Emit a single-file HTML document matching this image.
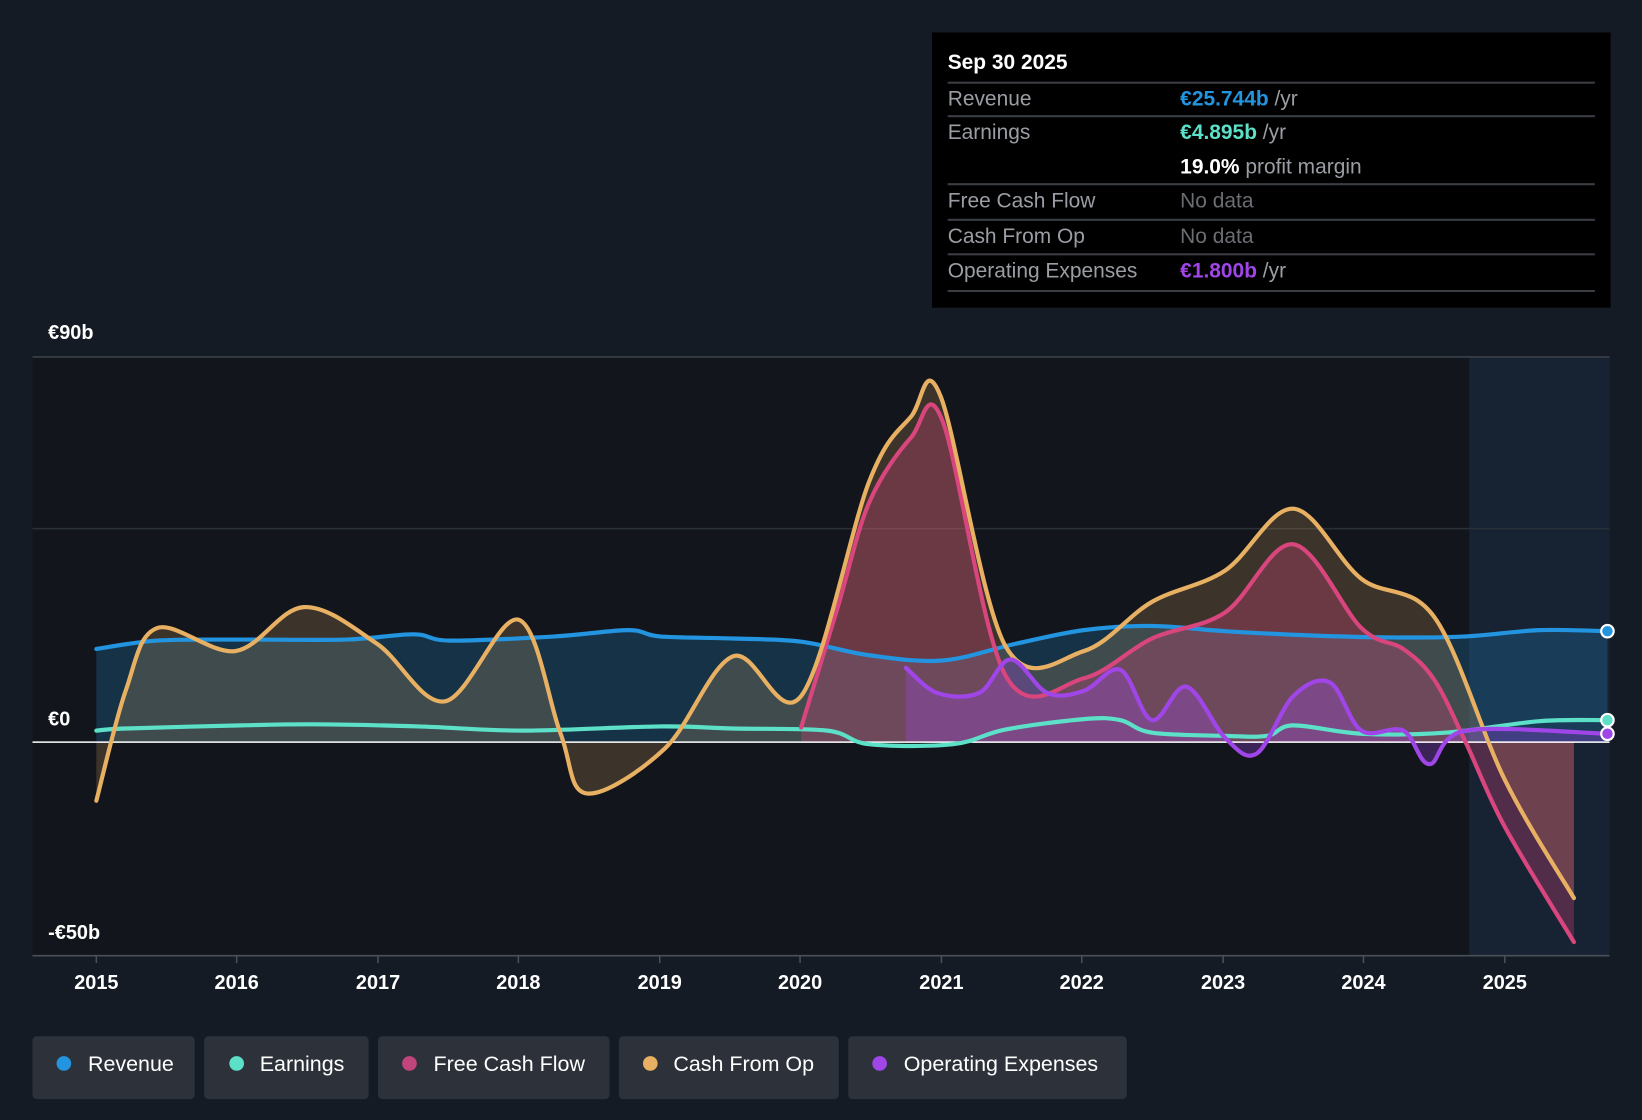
<!DOCTYPE html>
<html><head><meta charset="utf-8"><style>
html,body{margin:0;padding:0;background:#151b24;width:1642px;height:1120px;overflow:hidden}
svg{display:block}
text{font-family:"Liberation Sans",sans-serif}
</style></head><body>
<svg id="c" width="1642" height="1120" viewBox="0 0 1568 1070" preserveAspectRatio="none" xmlns="http://www.w3.org/2000/svg">
<rect width="1568" height="1070" fill="#151b24"/>
<rect x="31" y="341" width="1506" height="572" fill="#12161c"/>
<rect x="1403" y="341" width="134" height="572" fill="#172333"/>
<line x1="31" y1="341" x2="1537" y2="341" stroke="#3a4049" stroke-width="1.5"/>
<line x1="31" y1="505" x2="1537" y2="505" stroke="#2a3038" stroke-width="1.5"/>
<line x1="31" y1="913" x2="1537" y2="913" stroke="#4a5058" stroke-width="1.5"/>
<text x="46" y="324" fill="#fff" font-size="19" font-weight="bold">€90b</text>
<text x="46" y="693" fill="#fff" font-size="19" font-weight="bold">€0</text>
<text x="46" y="897" fill="#fff" font-size="19" font-weight="bold">-€50b</text>

<!-- fills -->
<polygon class="s" fill="#2394df" fill-opacity="0.22" points="92,709 92,620 150,612 230,611 330,611 395,606 430,612 530,608 600,602 630,608 700,610 765,613 830,626 900,631 970,615 1035,602 1100,598 1170,603 1250,607 1330,609 1400,608 1470,602 1535,603 1535,709"/>
<polygon class="s" fill="#e8b062" fill-opacity="0.2" points="92,709 92,765 120,660 150,600 225,622 290,580 360,615 425,670 495,592 535,700 560,758 635,715 700,627 765,665 830,460 870,398 898,378 960,617 1035,622 1100,575 1170,545 1235,486 1300,553 1370,590 1437,745 1503,858 1503,709"/>
<polygon class="s" fill="#d9457d" fill-opacity="0.3" points="765,709 765,695 800,580 830,480 870,418 900,402 960,645 1035,648 1100,610 1170,585 1235,520 1300,600 1340,620 1370,650 1400,710 1437,790 1503,900 1503,709"/>
<polygon class="s" fill="#a046e8" fill-opacity="0.3" points="865,709 865,638 895,662 935,662 965,630 1000,662 1035,660 1070,640 1100,688 1133,656 1170,705 1200,720 1235,665 1270,652 1300,698 1340,698 1365,730 1400,698 1535,701 1535,709"/>

<line x1="31" y1="709" x2="1537" y2="709" stroke="#fff" stroke-width="1.5"/>

<g fill="none" stroke-width="4" stroke-linejoin="round" stroke-linecap="round">
<polyline class="s" stroke="#2394df" points="92,620 150,612 230,611 330,611 395,606 430,612 530,608 600,602 630,608 700,610 765,613 830,626 900,631 970,615 1035,602 1100,598 1170,603 1250,607 1330,609 1400,608 1470,602 1535,603"/>
<polyline class="s" stroke="#5de0c8" points="92,698 120,696 230,693 300,692 400,694 500,698 630,694 700,696 790,698 830,711 910,711 960,697 1035,687 1070,688 1100,700 1170,703 1210,703 1235,693 1300,701 1380,700 1470,689 1535,688"/>
<polyline class="s" stroke="#d9457d" points="765,695 800,580 830,480 870,418 900,402 960,645 1035,648 1100,610 1170,585 1235,520 1300,600 1340,620 1370,650 1400,710 1437,790 1503,900"/>
<polyline class="s" stroke="#e8b062" points="92,765 120,660 150,600 225,622 290,580 360,615 425,670 495,592 535,700 560,758 635,715 700,627 765,665 830,460 870,398 898,378 960,617 1035,622 1100,575 1170,545 1235,486 1300,553 1370,590 1437,745 1503,858"/>
<polyline class="s" stroke="#a046e8" points="865,638 895,662 935,662 965,630 1000,662 1035,660 1070,640 1100,688 1133,656 1170,705 1200,720 1235,665 1270,652 1300,698 1340,698 1365,730 1400,698 1535,701"/>
</g>
<circle cx="1535" cy="603" r="6" fill="#2394df" stroke="#fff" stroke-width="2"/>
<circle cx="1535" cy="688" r="6" fill="#5de0c8" stroke="#fff" stroke-width="2"/>
<circle cx="1535" cy="701" r="6" fill="#a046e8" stroke="#fff" stroke-width="2"/>

<g fill="#fff" font-size="19" font-weight="bold" text-anchor="middle">
<text x="92" y="945">2015</text><text x="226" y="945">2016</text><text x="361" y="945">2017</text><text x="495" y="945">2018</text><text x="630" y="945">2019</text><text x="764" y="945">2020</text><text x="899" y="945">2021</text><text x="1033" y="945">2022</text><text x="1168" y="945">2023</text><text x="1302" y="945">2024</text><text x="1437" y="945">2025</text>
</g>
<g stroke="#4a5058" stroke-width="1.5">
<line x1="92" y1="913" x2="92" y2="920"/><line x1="226" y1="913" x2="226" y2="920"/><line x1="361" y1="913" x2="361" y2="920"/><line x1="495" y1="913" x2="495" y2="920"/><line x1="630" y1="913" x2="630" y2="920"/><line x1="764" y1="913" x2="764" y2="920"/><line x1="899" y1="913" x2="899" y2="920"/><line x1="1033" y1="913" x2="1033" y2="920"/><line x1="1168" y1="913" x2="1168" y2="920"/><line x1="1302" y1="913" x2="1302" y2="920"/><line x1="1437" y1="913" x2="1437" y2="920"/>
</g>

<!-- tooltip -->
<rect x="890" y="31" width="648" height="263" fill="#000"/>
<text x="905" y="66" fill="#fff" font-size="20" font-weight="bold">Sep 30 2025</text>
<g stroke="#3a3d42" stroke-width="2">
<line x1="905" y1="79" x2="1523" y2="79"/><line x1="905" y1="111" x2="1523" y2="111"/><line x1="905" y1="176" x2="1523" y2="176"/><line x1="905" y1="210" x2="1523" y2="210"/><line x1="905" y1="243" x2="1523" y2="243"/><line x1="905" y1="278" x2="1523" y2="278"/>
</g>
<g font-size="20" fill="#9a9ea4">
<text x="905" y="101">Revenue</text>
<text x="905" y="133">Earnings</text>
<text x="905" y="198">Free Cash Flow</text>
<text x="905" y="232">Cash From Op</text>
<text x="905" y="265">Operating Expenses</text>
<text x="1127" y="101"><tspan fill="#2394df" font-weight="bold">€25.744b</tspan> /yr</text>
<text x="1127" y="133"><tspan fill="#5de0c8" font-weight="bold">€4.895b</tspan> /yr</text>
<text x="1127" y="166"><tspan fill="#fff" font-weight="bold">19.0%</tspan> profit margin</text>
<text x="1127" y="198" fill="#6a6d72">No data</text>
<text x="1127" y="232" fill="#6a6d72">No data</text>
<text x="1127" y="265"><tspan fill="#a046e8" font-weight="bold">€1.800b</tspan> /yr</text>
</g>

<!-- legend -->
<g fill="#2d3139">
<rect x="31" y="990" width="155" height="60" rx="4"/>
<rect x="195" y="990" width="157" height="60" rx="4"/>
<rect x="361" y="990" width="221" height="60" rx="4"/>
<rect x="591" y="990" width="210" height="60" rx="4"/>
<rect x="810" y="990" width="266" height="60" rx="4"/>
</g>
<circle cx="61" cy="1016" r="7" fill="#2394df"/>
<circle cx="226" cy="1016" r="7" fill="#5de0c8"/>
<circle cx="391" cy="1016" r="7" fill="#c0457d"/>
<circle cx="621" cy="1016" r="7" fill="#e8b062"/>
<circle cx="840" cy="1016" r="7" fill="#a046e8"/>
<g fill="#fff" font-size="20.5">
<text x="84" y="1023">Revenue</text>
<text x="248" y="1023">Earnings</text>
<text x="414" y="1023">Free Cash Flow</text>
<text x="643" y="1023">Cash From Op</text>
<text x="863" y="1023">Operating Expenses</text>
</g>
</svg>
<script>
(function(){
var NS="http://www.w3.org/2000/svg";
function parse(s){return s.trim().split(/\s+/).map(function(p){var a=p.split(",");return [+a[0],+a[1]];});}
function smooth(pts){
  var d="";
  for(var i=0;i<pts.length-1;i++){
    var p0=pts[i-1]||pts[i],p1=pts[i],p2=pts[i+1],p3=pts[i+2]||p2;
    var c1=[p1[0]+(p2[0]-p0[0])/6,p1[1]+(p2[1]-p0[1])/6];
    var c2=[p2[0]-(p3[0]-p1[0])/6,p2[1]-(p3[1]-p1[1])/6];
    d+=" C"+c1[0]+","+c1[1]+" "+c2[0]+","+c2[1]+" "+p2[0]+","+p2[1];
  }
  return d;
}
var els=document.querySelectorAll(".s");
for(var k=0;k<els.length;k++){
  var el=els[k],pts=parse(el.getAttribute("points")),d;
  if(el.tagName.toLowerCase()=="polygon"){
    var a=pts[0],b=pts[pts.length-1],mid=pts.slice(1,pts.length-1);
    d="M"+a[0]+","+a[1]+" L"+mid[0][0]+","+mid[0][1]+smooth(mid)+" L"+b[0]+","+b[1]+" Z";
  } else {
    d="M"+pts[0][0]+","+pts[0][1]+smooth(pts);
  }
  var p=document.createElementNS(NS,"path");
  for(var j=0;j<el.attributes.length;j++){var at=el.attributes[j];if(at.name!="points"&&at.name!="class")p.setAttribute(at.name,at.value);}
  p.setAttribute("d",d);
  el.parentNode.replaceChild(p,el);
}
})();
</script>
</body></html>
